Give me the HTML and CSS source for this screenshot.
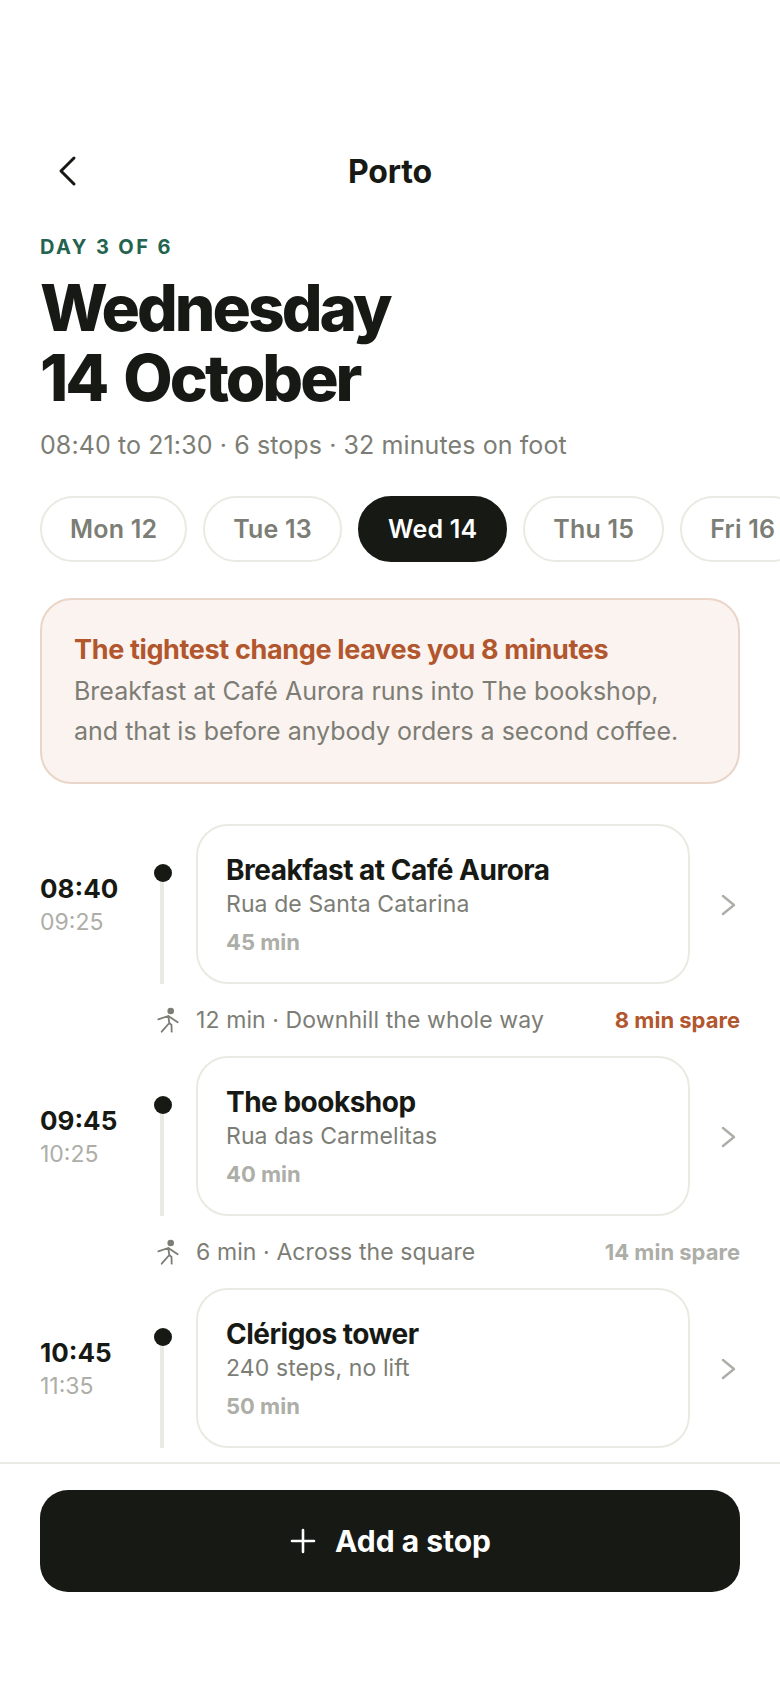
FILE: index.html
```html
<!DOCTYPE html>
<html lang="en">
<head>
    <meta charset="UTF-8">
    <meta name="viewport" content="width=device-width, initial-scale=1.0">
    <title>Porto</title>
    <link rel="stylesheet" href="styles.css">
</head>
<body>
    <main class="content">
        <header class="topbar">
            <svg class="back" width="32" height="32" viewBox="0 0 32 32"><path d="M22 3 L9 16 L22 29"/></svg>
            <span class="place">Porto</span>
        </header>

        <p class="eyebrow">DAY 3 OF 6</p>
        <h1>Wednesday<br>14 October</h1>
        <p class="summary">08:40 to 21:30 · 6 stops · 32 minutes on foot</p>

        <div class="days">
            <span class="day">Mon 12</span>
            <span class="day">Tue 13</span>
            <span class="day active">Wed 14</span>
            <span class="day">Thu 15</span>
            <span class="day">Fri 16</span>
        </div>

        <div class="warning">
            <h2>The tightest change leaves you 8 minutes</h2>
            <p>Breakfast at Café Aurora runs into The bookshop, and that is before anybody orders a second coffee.</p>
        </div>

        <!-- Stops -->
        <div class="stop">
            <div class="times"><strong>08:40</strong><span>09:25</span></div>
            <div class="rail"></div>
            <div class="card">
                <h3>Breakfast at Café Aurora</h3>
                <p>Rua de Santa Catarina</p>
                <small>45 min</small>
            </div>
            <svg class="chevron" width="20" height="24" viewBox="0 0 20 24"><path d="M4 3 L15 12 L4 21"/></svg>
        </div>
        <div class="walk">
            <svg class="walker" width="28" height="30" viewBox="0 0 28 30"><circle cx="16.7" cy="6" r="3.3"/><path d="M4.3 14.3 L14.3 11 L23.7 17.3 M14.3 11 L15.3 18 L7.7 26.7 M15.3 18 L17.5 20 L17.7 26.7"/></svg>
            <span class="walk-text">12 min · Downhill the whole way</span>
            <span class="spare tight">8 min spare</span>
        </div>

        <div class="stop">
            <div class="times"><strong>09:45</strong><span>10:25</span></div>
            <div class="rail"></div>
            <div class="card">
                <h3>The bookshop</h3>
                <p>Rua das Carmelitas</p>
                <small>40 min</small>
            </div>
            <svg class="chevron" width="20" height="24" viewBox="0 0 20 24"><path d="M4 3 L15 12 L4 21"/></svg>
        </div>
        <div class="walk">
            <svg class="walker" width="28" height="30" viewBox="0 0 28 30"><circle cx="16.7" cy="6" r="3.3"/><path d="M4.3 14.3 L14.3 11 L23.7 17.3 M14.3 11 L15.3 18 L7.7 26.7 M15.3 18 L17.5 20 L17.7 26.7"/></svg>
            <span class="walk-text">6 min · Across the square</span>
            <span class="spare">14 min spare</span>
        </div>

        <div class="stop">
            <div class="times"><strong>10:45</strong><span>11:35</span></div>
            <div class="rail"></div>
            <div class="card">
                <h3>Clérigos tower</h3>
                <p>240 steps, no lift</p>
                <small>50 min</small>
            </div>
            <svg class="chevron" width="20" height="24" viewBox="0 0 20 24"><path d="M4 3 L15 12 L4 21"/></svg>
        </div>
    </main>

    <footer class="bottom">
        <button class="add">
            <svg width="28" height="28" viewBox="0 0 28 28"><path d="M14 3 V25 M3 14 H25"/></svg>
            Add a stop
        </button>
    </footer>
</body>
</html>
```
FILE: styles.css
```css
* {
    box-sizing: border-box;
}
html, body {
    margin: 0;
    height: 100%;
}
body {
    width: 780px;
    height: 1688px;
    display: flex;
    flex-direction: column;
    overflow: hidden;
    background: #fff;
    color: #171914;
    font-family: Inter, "Liberation Sans", sans-serif;
}
p, h1, h2, h3 {
    margin: 0;
}
.content {
    height: 1462px;
    overflow: hidden;
    padding: 147px 0 0 40px;
}
.topbar {
    position: relative;
    width: 700px;
    height: 48px;
    display: flex;
    align-items: center;
    justify-content: center;
}
.back {
    position: absolute;
    left: 12px;
    top: 8px;
    fill: none;
    stroke: #171914;
    stroke-width: 3;
    stroke-linecap: round;
    stroke-linejoin: round;
}
.place {
    font-size: 32px;
    font-weight: 700;
    letter-spacing: -0.2px;
}
.eyebrow {
    margin-top: 38px;
    font-size: 20px;
    line-height: 28px;
    font-weight: 700;
    letter-spacing: 2.4px;
    color: #24634f;
}
h1 {
    margin-top: 12px;
    font-size: 64px;
    line-height: 70px;
    font-weight: 800;
    letter-spacing: -3px;
    word-spacing: 6px;
}
.summary {
    margin-top: 14px;
    font-size: 25px;
    line-height: 36px;
    letter-spacing: 0.1px;
    color: #7c7d75;
}
.days {
    display: flex;
    gap: 16px;
    margin-top: 33px;
    width: 740px;
    overflow: hidden;
}
.day {
    flex: none;
    height: 66px;
    padding: 0 28px;
    display: flex;
    align-items: center;
    border: 2px solid #eaeae3;
    border-radius: 33px;
    font-size: 25px;
    font-weight: 600;
    letter-spacing: 0.2px;
    color: #7c7d75;
}
.day.active {
    background: #171914;
    border-color: #171914;
    color: #fff;
}
.warning {
    width: 700px;
    margin-top: 36px;
    height: 186px;
    padding: 32px 32px 0;
    background: #fbf3ef;
    border: 2px solid #e9d6c8;
    border-radius: 32px;
}
.warning h2 {
    font-size: 27px;
    line-height: 36px;
    font-weight: 700;
    letter-spacing: -0.35px;
    color: #b2562e;
}
.warning p {
    margin-top: 3px;
    font-size: 25px;
    line-height: 40px;
    color: #7c7d75;
}
.stop {
    display: flex;
    align-items: stretch;
    width: 700px;
    height: 160px;
}
.warning + .stop {
    margin-top: 40px;
}
.times {
    width: 108px;
    flex: none;
    align-self: center;
    display: flex;
    flex-direction: column;
    padding-top: 1px;
    font-size: 23px;
    line-height: 32px;
    color: #adaea7;
}
.times strong {
    margin-bottom: -1px;
    font-size: 26px;
    line-height: 36px;
    font-weight: 700;
    color: #171914;
}
.rail {
    position: relative;
    width: 48px;
    flex: none;
}
.rail::before {
    content: "";
    position: absolute;
    left: 12px;
    top: 40px;
    bottom: 0;
    width: 4px;
    background: #eaeae3;
}
.rail::after {
    content: "";
    position: absolute;
    left: 6px;
    top: 40px;
    width: 18px;
    height: 18px;
    border-radius: 50%;
    background: #171914;
}
.card {
    width: 494px;
    flex: none;
    padding: 26px 28px 0;
    border: 2px solid #eaeae3;
    border-radius: 32px;
}
.card h3 {
    font-size: 28px;
    line-height: 36px;
    font-weight: 700;
    letter-spacing: -0.5px;
}
.card p {
    font-size: 23px;
    line-height: 32px;
    letter-spacing: 0.1px;
    color: #7c7d75;
}
.card small {
    display: block;
    margin-top: 7px;
    font-size: 22px;
    line-height: 30px;
    font-weight: 700;
    color: #adaea7;
}
.chevron {
    align-self: center;
    margin: 2px 0 0 29px;
    fill: none;
    stroke: #adaea7;
    stroke-width: 2.4;
    stroke-linecap: round;
    stroke-linejoin: round;
}
.walk {
    width: 586px;
    height: 72px;
    display: flex;
    align-items: center;
    margin-left: 114px;
}
.walker {
    flex: none;
    margin-right: 14px;
    fill: none;
    stroke: #7c7d75;
    stroke-width: 1.8;
    stroke-linecap: round;
    stroke-linejoin: round;
}
.walker circle {
    fill: #7c7d75;
    stroke: none;
}
.walk-text {
    font-size: 23px;
    letter-spacing: 0.1px;
    color: #7c7d75;
}
.spare {
    margin-left: auto;
    font-size: 22px;
    font-weight: 700;
    color: #adaea7;
}
.spare.tight {
    color: #b2562e;
}
.bottom {
    height: 226px;
    flex: none;
    padding: 26px 40px 0;
    border-top: 2px solid #eaeae3;
}
.add {
    width: 100%;
    height: 102px;
    display: flex;
    align-items: center;
    justify-content: center;
    gap: 18px;
    border: none;
    border-radius: 28px;
    background: #171914;
    color: #fff;
    font-family: inherit;
    font-size: 30px;
    font-weight: 700;
}
.add svg {
    fill: none;
    stroke: #fff;
    stroke-width: 2.6;
    stroke-linecap: round;
}
```
